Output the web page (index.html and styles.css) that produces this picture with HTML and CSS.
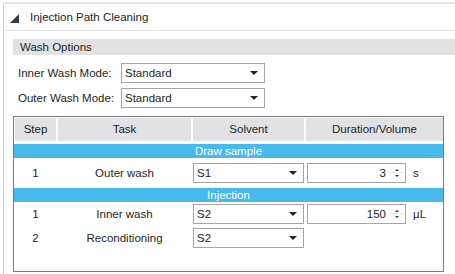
FILE: index.html
```html
<!DOCTYPE html>
<html lang="en">

<head>
    <meta charset="utf-8">
    <title>Injection Path Cleaning</title>
    <link rel="stylesheet" href="styles.css">
</head>

<body>
    <div class="panel">
        <!-- Section header -->
        <div class="section-head">
            <span class="collapse-icon"></span>
            <span class="section-title">Injection Path Cleaning</span>
        </div>

        <div class="section-body">
            <div class="group-bar">Wash Options</div>

            <div class="form-row">
                <label class="form-label">Inner Wash Mode:</label>
                <div class="combo wide"><span>Standard</span><span class="arrow"></span></div>
            </div>
            <div class="form-row">
                <label class="form-label">Outer Wash Mode:</label>
                <div class="combo wide"><span>Standard</span><span class="arrow"></span></div>
            </div>

            <!-- Wash steps table -->
            <div class="grid-box">
                <div class="grid-head">
                    <div class="head-cell">Step</div>
                    <div class="head-cell">Task</div>
                    <div class="head-cell">Solvent</div>
                    <div class="head-cell">Duration/Volume</div>
                </div>

                <div class="band">Draw sample</div>
                <div class="grid-row first">
                    <div class="cell">1</div>
                    <div class="cell">Outer wash</div>
                    <div class="combo"><span>S1</span><span class="arrow"></span></div>
                    <div class="value-cell">
                        <div class="spin"><span class="spin-value">3</span><span class="spin-btns"><span class="up"></span><span class="down"></span></span></div>
                        <span class="unit">s</span>
                    </div>
                </div>

                <div class="band">Injection</div>
                <div class="grid-row">
                    <div class="cell">1</div>
                    <div class="cell">Inner wash</div>
                    <div class="combo"><span>S2</span><span class="arrow"></span></div>
                    <div class="value-cell">
                        <div class="spin"><span class="spin-value">150</span><span class="spin-btns"><span class="up"></span><span class="down"></span></span></div>
                        <span class="unit">µL</span>
                    </div>
                </div>
                <div class="grid-row">
                    <div class="cell">2</div>
                    <div class="cell">Reconditioning</div>
                    <div class="combo"><span>S2</span><span class="arrow"></span></div>
                    <div class="value-cell"></div>
                </div>
            </div>
        </div>
    </div>
</body>

</html>
```

FILE: styles.css
```css
body {
    margin: 0;
    background-color: #fff;
    color: #1e1e1e;
    font-family: "Liberation Sans", Arial, sans-serif;
    font-size: 11.5px;
}

.panel {
    margin: 2px 0 0 3px;
    border-top: 2px solid #e6e6e6;
    border-left: 1px solid #c9d1d6;
    height: 272px;
    box-sizing: border-box;
}

.section-head {
    height: 26px;
    display: flex;
    align-items: center;
    border-bottom: 1px solid #e6e6e6;
    padding-left: 6px;
}

.collapse-icon {
    width: 0;
    height: 0;
    border-left: 9px solid transparent;
    border-bottom: 9px solid #2f3b46;
    margin-right: 11px;
    margin-top: 2px;
}

.section-body {
    padding: 8px 0 0 9px;
}

.group-bar {
    background-color: #e2e2e4;
    height: 16px;
    line-height: 16px;
    padding-left: 7px;
}

.form-row {
    display: flex;
    align-items: center;
    margin-top: 8px;
    padding-left: 5px;
}

.form-row + .form-row {
    margin-top: 5px;
}

.form-label {
    width: 103px;
}

.combo {
    display: flex;
    align-items: center;
    justify-content: space-between;
    height: 20px;
    border: 1px solid #a5a5a5;
    box-sizing: border-box;
    padding: 0 6px 0 3px;
    background-color: #fff;
}

.combo.wide {
    width: 144px;
}

.arrow {
    width: 0;
    height: 0;
    border-left: 4px solid transparent;
    border-right: 4px solid transparent;
    border-top: 4px solid #222;
}

.grid-box {
    margin-top: 8px;
    width: 431px;
    height: 156px;
    border: 1px solid #7a7a7a;
    box-sizing: border-box;
}

.grid-head,
.grid-row {
    display: grid;
    grid-template-columns: 41px 133px 111px 137px;
    column-gap: 2px;
    padding-left: 1px;
}

.grid-head {
    padding-top: 1px;
    margin-bottom: 3px;
}

.head-cell {
    background-color: #e2e2e4;
    height: 23px;
    line-height: 23px;
    text-align: center;
}

.band {
    background-color: #47b9ec;
    color: #fff;
    height: 14px;
    line-height: 14px;
    text-align: center;
}

.grid-row {
    align-items: center;
    height: 24px;
}

.grid-row.first {
    height: 30px;
}

.cell {
    text-align: center;
}

.value-cell {
    display: flex;
    align-items: center;
}

.spin {
    display: flex;
    align-items: center;
    justify-content: flex-end;
    width: 99px;
    height: 20px;
    border: 1px solid #a5a5a5;
    box-sizing: border-box;
    margin-left: 1px;
}

.spin-value {
    margin-right: 3px;
}

.spin-btns {
    width: 16px;
    height: 18px;
    display: flex;
    flex-direction: column;
    align-items: center;
    justify-content: center;
    gap: 4px;
    background: linear-gradient(#fff 8px, #e4e4e4 8px, #e4e4e4 9px, #fff 9px);
}

.spin-btns .up,
.spin-btns .down {
    width: 0;
    height: 0;
    border-left: 2.5px solid transparent;
    border-right: 2.5px solid transparent;
}

.spin-btns .up {
    border-bottom: 2px solid #333;
}

.spin-btns .down {
    border-top: 2px solid #333;
}

.unit {
    margin-left: 7px;
}
```
